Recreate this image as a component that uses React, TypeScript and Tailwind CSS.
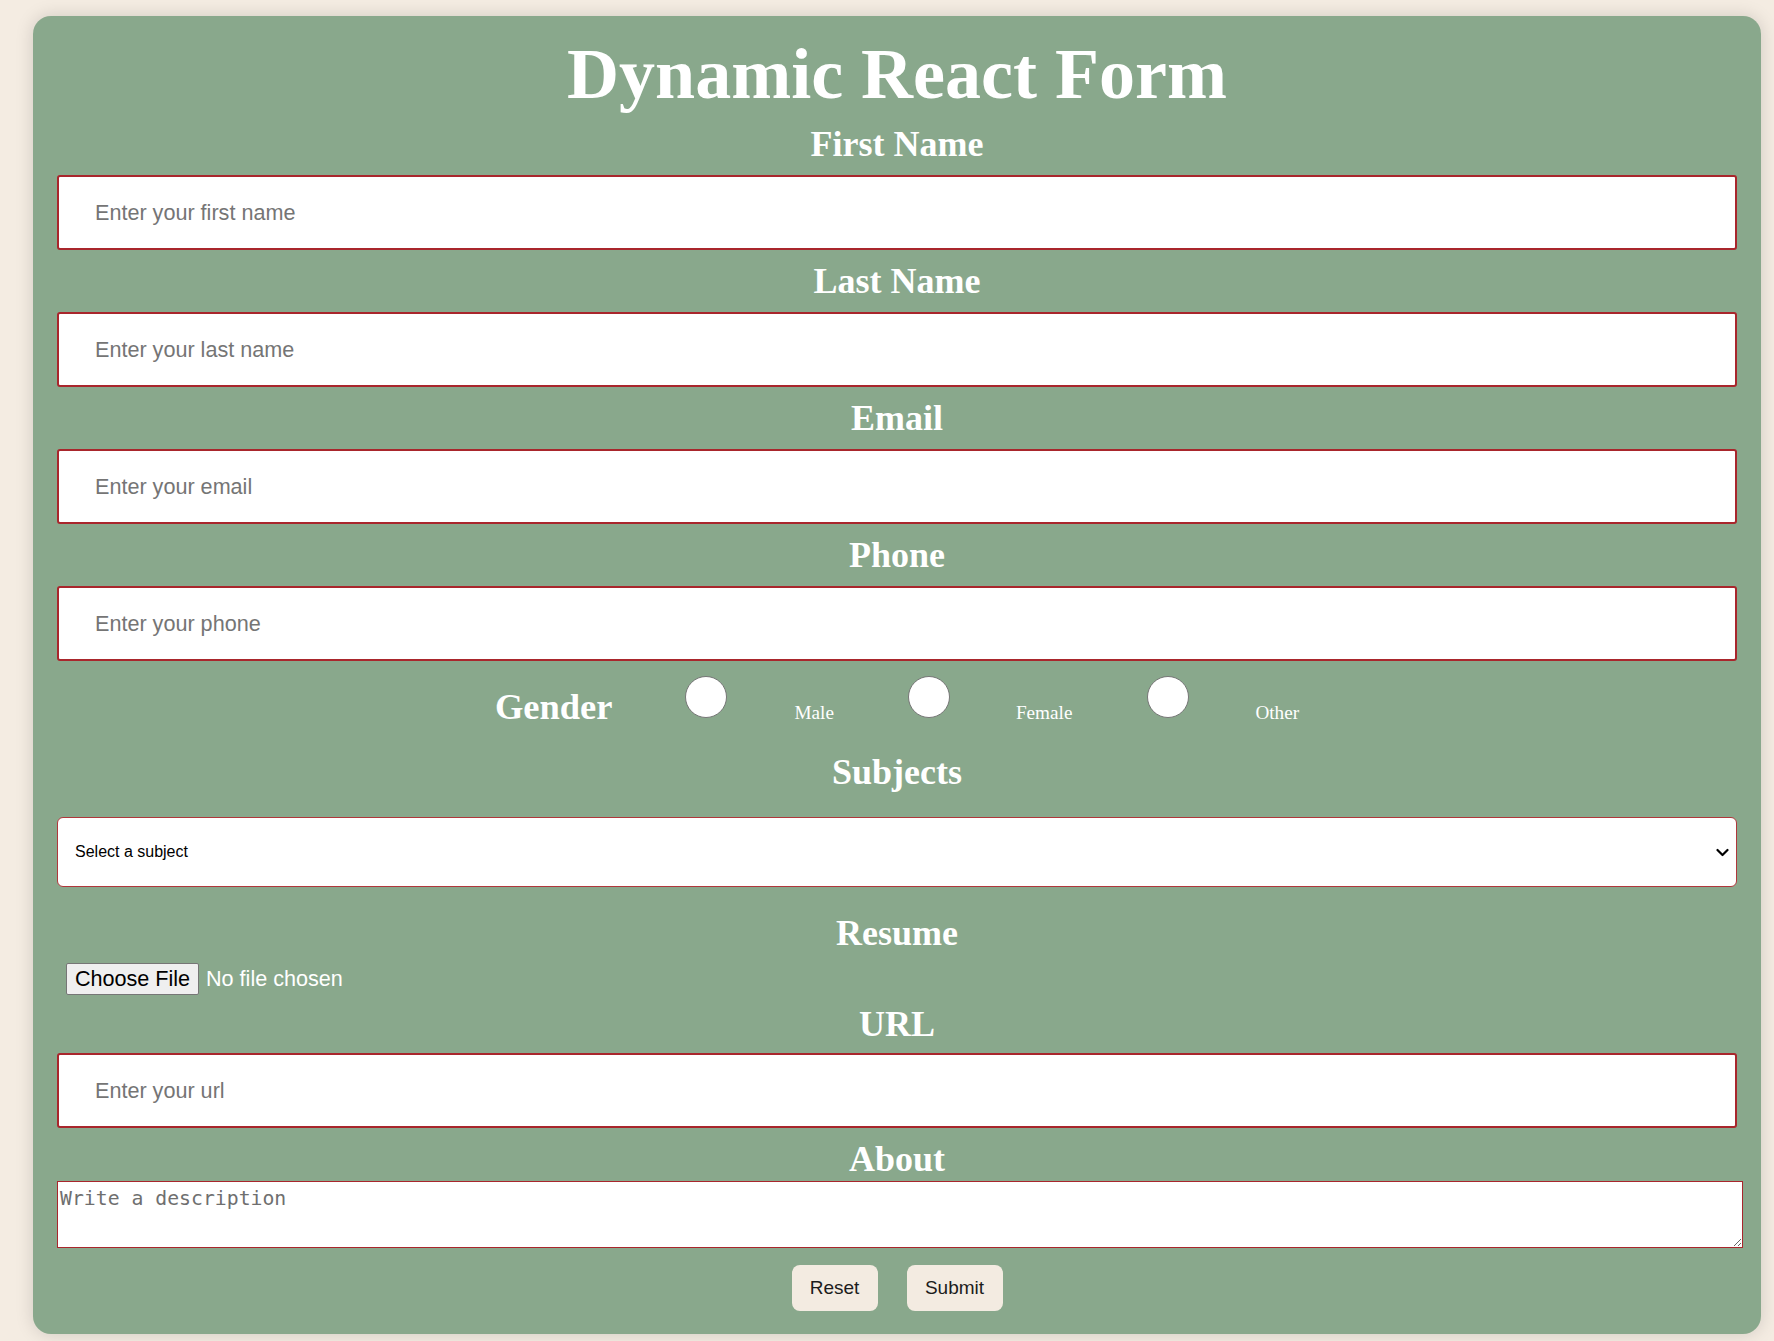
import React from "react";

const serif = "[font-family:'Liberation_Serif','Times_New_Roman',serif]";
const sans = "[font-family:'Liberation_Sans',Arial,sans-serif]";

function Label({ children }: { children: React.ReactNode }) {
  return (
    <div className="h-[62px] leading-[62px] text-center text-[36px] font-bold text-white [font-family:'Liberation_Serif','Times_New_Roman',serif]">
      {children}
    </div>
  );
}

function TextInput({ placeholder }: { placeholder: string }) {
  return (
    <input
      type="text"
      placeholder={placeholder}
      className="block h-[75px] w-full rounded-[3px] border-2 border-[#a9262c] bg-white pl-[36px] text-[21.6px] text-[#222] outline-none placeholder:text-[#757575] [font-family:'Liberation_Sans',Arial,sans-serif]"
    />
  );
}

function Radio() {
  return <div className="mt-[15px] h-[42px] w-[42px] shrink-0 rounded-full border border-[#767676] bg-white" />;
}

export default function App() {
  return (
    <div className="min-h-screen w-full bg-[#f4ece2] pt-[16px] pb-[7px]">
      <div className="ml-[33px] flex w-[1728px] flex-col rounded-[18px] bg-[#89a88c] px-[24px] pt-[19px] pb-[23px] shadow-[0_0_18px_rgba(0,0,0,0.15)]">
        <h1 className={`h-[78px] text-center text-[72px] font-bold leading-[78px] text-white ${serif}`}>
          Dynamic React Form
        </h1>

        <Label>First Name</Label>
        <TextInput placeholder="Enter your first name" />
        <Label>Last Name</Label>
        <TextInput placeholder="Enter your last name" />
        <Label>Email</Label>
        <TextInput placeholder="Enter your email" />
        <Label>Phone</Label>
        <TextInput placeholder="Enter your phone" />

        <div className={`flex h-[80px] items-start justify-center text-white ${serif}`}>
          <span className="mt-[25px] text-[36.5px] font-bold leading-[41px]">Gender</span>
          <div className="ml-[73px]">
            <Radio />
          </div>
          <span className="ml-[67px] mt-[41px] text-[19.2px] leading-[22px]">Male</span>
          <div className="ml-[74px]">
            <Radio />
          </div>
          <span className="ml-[66px] mt-[41px] text-[19.2px] leading-[22px]">Female</span>
          <div className="ml-[75px]">
            <Radio />
          </div>
          <span className="ml-[66px] mt-[41px] text-[19.2px] leading-[22px]">Other</span>
        </div>

        <Label>Subjects</Label>
        <div className={`mt-[14px] flex h-[70px] w-full items-center justify-between rounded-[6px] border border-[#b0373b] bg-white pl-[17px] pr-[7px] text-[16px] text-black ${sans}`}>
          <span>Select a subject</span>
          <svg width="13" height="9" viewBox="0 0 13 9" fill="none">
            <path d="M1.5 2 L6.5 7 L11.5 2" stroke="#000" strokeWidth="2.2" strokeLinecap="round" strokeLinejoin="round" />
          </svg>
        </div>

        <div className={`mt-[16px] h-[60px] text-center text-[36px] font-bold leading-[60px] text-white ${serif}`}>Resume</div>
        <div className={`flex h-[32px] items-center pl-[9px] text-[21.6px] ${sans}`}>
          <span className="flex h-[32px] w-[133px] items-center justify-center rounded-[2px] border border-[#767676] bg-[#efefef] text-black">
            Choose File
          </span>
          <span className="ml-[7px] text-white">No file chosen</span>
        </div>

        <div className={`h-[58px] text-center text-[36px] font-bold leading-[58px] text-white ${serif}`}>URL</div>
        <TextInput placeholder="Enter your url" />

        <div className={`h-[53px] pt-[11px] text-center text-[36px] font-bold leading-[41px] text-white ${serif}`}>About</div>
        <textarea
          placeholder="Write a description"
          className="block h-[67px] w-[1686px] resize rounded-none border border-[#a9262c] bg-white p-[2px] text-[19.8px] text-[#222] outline-none placeholder:text-[#6f6f6f] [font-family:'DejaVu_Sans_Mono','Liberation_Mono',monospace]"
        />

        <div className={`mt-[17px] flex justify-center gap-[29px] text-[19px] ${sans}`}>
          <button type="button" className="h-[46px] w-[86px] rounded-[8px] bg-[#f3ebe1] text-[#1c1c1c]">
            Reset
          </button>
          <button type="button" className="h-[46px] w-[96px] rounded-[8px] bg-[#f3ebe1] text-[#1c1c1c]">
            Submit
          </button>
        </div>
      </div>
    </div>
  );
}
